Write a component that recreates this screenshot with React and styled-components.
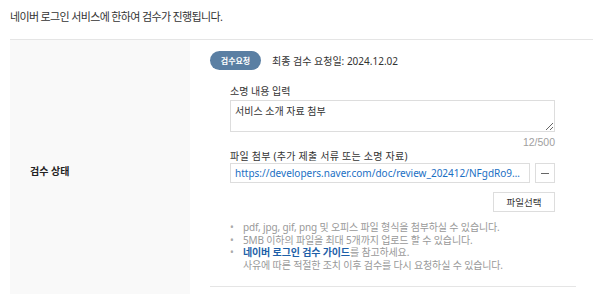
import React from "react";
import styled, { createGlobalStyle } from "styled-components";

const Global = createGlobalStyle`
  html, body { margin: 0; padding: 0; background: #fff; }
  body { font-family: "Noto Sans", "Noto Sans CJK KR", sans-serif; color: #333; }
  * { box-sizing: border-box; }
`;

const Page = styled.div`
  padding: 8px 0 0 10px;
  width: 593px;
  height: 294px;
  overflow: hidden;
`;

const Intro = styled.p`
  margin: 0 0 13px;
  font-size: 11px;
  line-height: 18px;
  letter-spacing: -0.65px;
  color: #333;
`;

const Table = styled.div`
  display: grid;
  grid-template-columns: 180px 1fr;
  border-top: 1px solid #e5e5e5;
`;

const Th = styled.div`
  background: #f9f9f9;
  display: flex;
  align-items: center;
  padding-left: 20px;
  font-size: 10px;
  font-weight: 700;
  color: #222;
  height: 260px;
`;

const Td = styled.div`
  padding: 11px 17px 0 20px;
`;

const StatusRow = styled.div`
  display: flex;
  align-items: center;
  gap: 11px;
`;

const Badge = styled.span`
  display: inline-flex;
  align-items: center;
  justify-content: center;
  width: 51px;
  height: 19px;
  border-radius: 10px;
  background: #5a7fa3;
  color: #fff;
  font-size: 8px;
  font-weight: 700;
`;

const StatusText = styled.span`
  font-size: 10px;
  color: #333;
`;

const Field = styled.div`
  padding-left: 20px;
  padding-right: 21px;
  display: flex;
  flex-direction: column;
`;

const Label = styled.div`
  font-size: 10px;
  line-height: 14px;
  letter-spacing: ${(p) => p.$ls || 0}px;
  color: #333;
  margin-top: ${(p) => p.$mt || 0}px;
  margin-bottom: ${(p) => (p.$mb === undefined ? 2 : p.$mb)}px;
`;

const TextArea = styled.textarea`
  display: block;
  width: 325px;
  height: 32px;
  border: 1px solid #ddd;
  padding: 3px 4px;
  font-family: inherit;
  font-size: 10px;
  line-height: 14px;
  color: #333;
  resize: vertical;
  outline: none;
`;

const Counter = styled.div`
  width: 325px;
  text-align: right;
  font-family: "Liberation Sans", Arial, sans-serif;
  font-size: 10.5px;
  color: #a0a0a0;
  line-height: 14px;
  margin-top: 3px;
`;

const FileRow = styled.div`
  display: flex;
  gap: 5px;
  width: 325px;
`;

const FileInput = styled.div`
  flex: 1;
  height: 20px;
  border: 1px solid #ddd;
  padding: 0 4px;
  display: flex;
  align-items: center;
  font-size: 10px;
  color: #1a6fc4;
  min-width: 0;
`;

const Ellip = styled.span`
  overflow: hidden;
  text-overflow: ellipsis;
  white-space: nowrap;
`;

const SmallBtn = styled.button`
  width: 20px;
  height: 20px;
  border: 1px solid #ddd;
  background: #fff;
  padding: 0;
  display: flex;
  align-items: center;
  justify-content: center;
  cursor: pointer;
`;

const BtnRow = styled.div`
  width: 325px;
  display: flex;
  justify-content: flex-end;
  margin-top: 9px;
`;

const SelectBtn = styled.button`
  width: 62px;
  height: 20px;
  border: 1px solid #ddd;
  background: #fff;
  font-family: inherit;
  font-size: 9.5px;
  color: #333;
  padding: 0;
  cursor: pointer;
`;

const Notes = styled.ul`
  list-style: none;
  margin: 9px 0 0;
  padding: 0;
  font-size: 10px;
  line-height: 12.5px;
  letter-spacing: -0.15px;
  color: #999;
`;

const Note = styled.li`
  position: relative;
  padding-left: 13px;
  &::before {
    content: "•";
    position: absolute;
    left: 0;
    top: 0;
    color: #aaa;
  }
`;

const Guide = styled.a`
  color: #1d5fa8;
  font-weight: 700;
  text-decoration: none;
`;

const Divider = styled.div`
  height: 1px;
  background: #e5e5e5;
  margin-top: 15px;
  width: 366px;
`;

export default function App() {
  return (
    <>
      <Global />
      <Page>
        <Intro>네이버 로그인 서비스에 한하여 검수가 진행됩니다.</Intro>
        <Table>
          <Th>검수 상태</Th>
          <Td>
            <StatusRow>
              <Badge>검수요청</Badge>
              <StatusText>최종 검수 요청일: 2024.12.02</StatusText>
            </StatusRow>
            <Field>
              <Label $mt={14}>소명 내용 입력</Label>
              <TextArea defaultValue="서비스 소개 자료 첨부" />
              <Counter>12/500</Counter>
              <Label $mt={0} $mb={0} $ls={0.25}>파일 첨부 (추가 제출 서류 또는 소명 자료)</Label>
              <FileRow>
                <FileInput>
                  <Ellip>https://developers.naver.com/doc/review_202412/NFgdRo9TkLmXq2024.pdf</Ellip>
                </FileInput>
                <SmallBtn aria-label="삭제">
                  <svg width="8" height="1" viewBox="0 0 8 1">
                    <rect x="0" y="0" width="8" height="1" fill="#666" />
                  </svg>
                </SmallBtn>
              </FileRow>
              <BtnRow>
                <SelectBtn>파일선택</SelectBtn>
              </BtnRow>
              <Notes>
                <Note>pdf, jpg, gif, png 및 오피스 파일 형식을 첨부하실 수 있습니다.</Note>
                <Note>5MB 이하의 파일을 최대 5개까지 업로드 할 수 있습니다.</Note>
                <Note>
                  <Guide href="#">네이버 로그인 검수 가이드</Guide>를 참고하세요.
                  <br />
                  사유에 따른 적절한 조치 이후 검수를 다시 요청하실 수 있습니다.
                </Note>
              </Notes>
            </Field>
            <Divider />
          </Td>
        </Table>
      </Page>
    </>
  );
}
